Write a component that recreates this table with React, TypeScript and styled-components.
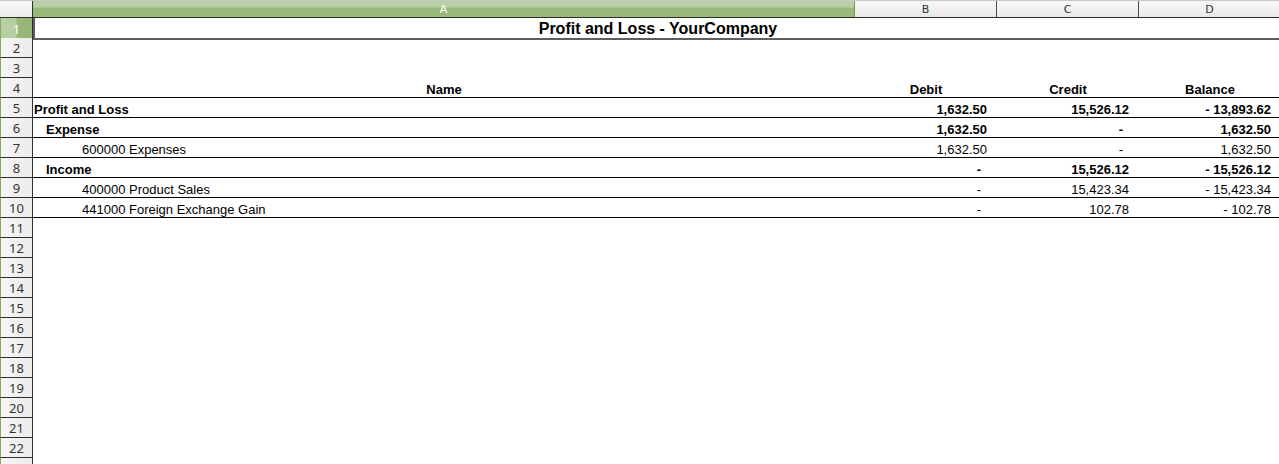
import React from "react";
import styled, { createGlobalStyle } from "styled-components";

const COLS = ["A", "B", "C", "D"];
const COL_WIDTHS = [822, 142, 142, 142];
const GRID = `33px ${COL_WIDTHS.map((w) => `${w}px`).join(" ")}`;

type Cell = {
    text: string;
    align?: "left" | "center" | "right";
    bold?: boolean;
    indent?: number;
    pad?: number;
};

type RowData = {
    cells: Cell[];
    ruled?: boolean;
};

const num = (text: string, bold = false): Cell => ({
    text,
    align: "right",
    bold,
    pad: text === "-" ? 16 : 10,
});

const ROWS: RowData[] = [
    { cells: [] },
    { cells: [] },
    {
        ruled: true,
        cells: [
            { text: "Name", align: "center", bold: true },
            { text: "Debit", align: "center", bold: true },
            { text: "Credit", align: "center", bold: true },
            { text: "Balance", align: "center", bold: true },
        ],
    },
    {
        ruled: true,
        cells: [
            { text: "Profit and Loss", bold: true, indent: 1 },
            num("1,632.50", true),
            num("15,526.12", true),
            num("- 13,893.62", true),
        ],
    },
    {
        ruled: true,
        cells: [
            { text: "Expense", bold: true, indent: 13 },
            num("1,632.50", true),
            num("-", true),
            num("1,632.50", true),
        ],
    },
    {
        ruled: true,
        cells: [
            { text: "600000 Expenses", indent: 49 },
            num("1,632.50"),
            num("-"),
            num("1,632.50"),
        ],
    },
    {
        ruled: true,
        cells: [
            { text: "Income", bold: true, indent: 13 },
            num("-", true),
            num("15,526.12", true),
            num("- 15,526.12", true),
        ],
    },
    {
        ruled: true,
        cells: [
            { text: "400000 Product Sales", indent: 49 },
            num("-"),
            num("15,423.34"),
            num("- 15,423.34"),
        ],
    },
    {
        ruled: true,
        cells: [
            { text: "441000 Foreign Exchange Gain", indent: 49 },
            num("-"),
            num("102.78"),
            num("- 102.78"),
        ],
    },
];

// rows 2..22 are labelled; one more peeks in under the window edge
const LABELLED_ROWS = 22;

const App = () => {
    return (
        <>
            <GlobalStyle />
            <Sheet>
                <HeaderRow>
                    <Corner />
                    {COLS.map((c, i) => (
                        <ColHeader key={c} $selected={i === 0}>
                            {c}
                        </ColHeader>
                    ))}
                </HeaderRow>

                <Row>
                    <RowHeader $selected>1</RowHeader>
                    <TitleCell>
                        <span>Profit and Loss - YourCompany</span>
                        <CursorTick />
                    </TitleCell>
                </Row>

                {Array.from({ length: LABELLED_ROWS }, (_, i) => {
                    const n = i + 2;
                    const data = ROWS[i];
                    return (
                        <Row key={n}>
                            <RowHeader>{n <= LABELLED_ROWS ? n : ""}</RowHeader>
                            {COLS.map((c, ci) => {
                                const cell = data?.cells[ci];
                                return (
                                    <DataCell
                                        key={c}
                                        $ruled={!!data?.ruled}
                                        $align={cell?.align ?? "left"}
                                        $bold={!!cell?.bold}
                                        $indent={cell?.indent ?? 0}
                                        $pad={cell?.pad ?? 0}
                                    >
                                        {cell?.text}
                                    </DataCell>
                                );
                            })}
                        </Row>
                    );
                })}
            </Sheet>
        </>
    );
};

export default App;

const GlobalStyle = createGlobalStyle`
    html, body {
        margin: 0;
        padding: 0;
        background: #ffffff;
        overflow: hidden;
    }
`;

const Sheet = styled.div`
    width: 1279px;
    height: 464px;
    overflow: hidden;
    background: #ffffff;
    font-family: "Liberation Sans", Arial, sans-serif;
    color: #000000;
`;

const HeaderRow = styled.div`
    display: grid;
    grid-template-columns: ${GRID};
    height: 18px;
    box-sizing: border-box;
    border-top: 1px solid #c8c8c8;
    border-bottom: 1px solid #2e2e2e;
`;

const Corner = styled.div`
    background: linear-gradient(#f6f6f6, #ececec);
    border-right: 1px solid #2e2e2e;
`;

const ColHeader = styled.div<{ $selected?: boolean }>`
    display: flex;
    align-items: center;
    justify-content: center;
    font-family: "DejaVu Sans", "Noto Sans", sans-serif;
    font-size: 11px;
    color: ${({ $selected }) => ($selected ? "#ffffff" : "#333333")};
    background: ${({ $selected }) =>
        $selected
            ? "linear-gradient(#b9d0a6 0, #b9d0a6 6px, #9bb97c 7px, #98b778 100%)"
            : "linear-gradient(#f8f8f8, #e9e9e9)"};
    border-right: 1px solid
        ${({ $selected }) => ($selected ? "#6f9a45" : "#4a4a4a")};
    padding-top: 1px;
`;

const Row = styled.div`
    display: grid;
    grid-template-columns: ${GRID};
    height: 20px;
`;

const RowHeader = styled.div<{ $selected?: boolean }>`
    display: flex;
    align-items: center;
    justify-content: center;
    box-sizing: border-box;
    padding-top: 1px;
    font-family: "Noto Sans", "DejaVu Sans", sans-serif;
    font-size: 13px;
    color: ${({ $selected }) => ($selected ? "#ffffff" : "#333333")};
    background: ${({ $selected }) =>
        $selected
            ? "linear-gradient(90deg, #b7cda2 0, #b7cda2 45%, #97b677 55%, #97b677 100%)"
            : "linear-gradient(90deg, #f6f6f6, #ebebeb)"};
    border-left: 1px solid #84ad5a;
    border-right: 1px solid #2e2e2e;
    border-bottom: 1px solid #2e2e2e;
`;

const TitleCell = styled.div`
    position: relative;
    grid-column: 2 / span 4;
    display: flex;
    align-items: center;
    justify-content: center;
    box-sizing: border-box;
    padding-top: 2px;
    font-size: 16px;
    font-weight: bold;
    border-left: 2px solid #5e5e5e;
    border-bottom: 2px solid #5e5e5e;
`;

const CursorTick = styled.span`
    position: absolute;
    right: 0;
    bottom: -2px;
    width: 1px;
    height: 5px;
    background: #5e5e5e;
`;

const DataCell = styled.div<{
    $ruled: boolean;
    $align: "left" | "center" | "right";
    $bold: boolean;
    $indent: number;
    $pad: number;
}>`
    display: flex;
    align-items: flex-end;
    justify-content: ${({ $align }) =>
        $align === "right"
            ? "flex-end"
            : $align === "center"
              ? "center"
              : "flex-start"};
    box-sizing: border-box;
    padding: 0 ${({ $pad }) => $pad}px 0 ${({ $indent }) => $indent}px;
    font-size: 13px;
    line-height: 15px;
    font-weight: ${({ $bold }) => ($bold ? "bold" : "normal")};
    white-space: nowrap;
    border-bottom: 1px solid
        ${({ $ruled }) => ($ruled ? "#000000" : "transparent")};
`;
